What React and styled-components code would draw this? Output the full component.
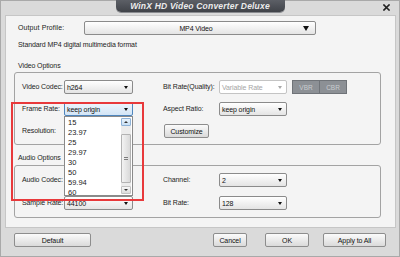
import React from 'react';
import styled, { createGlobalStyle, css } from 'styled-components';

const Global = createGlobalStyle`
  html, body { margin: 0; padding: 0; }
  body {
    width: 400px; height: 257px; overflow: hidden;
    background: #d6d6d6;
    font-family: "Liberation Sans", Arial, sans-serif;
  }
`;

const Window = styled.div`
  position: relative;
  width: 400px; height: 257px; box-sizing: border-box;
  display: flex; flex-direction: column;
  background: #dadada;
  border: 1px solid #a9a9a9;
`;

const TitleBar = styled.div`
  height: 14px; flex: none;
  display: grid; grid-template-columns: 1fr auto 1fr;
  align-items: start;
`;

const TitleTab = styled.div`
  grid-column: 2;
  width: 169px; height: 12px;
  margin-top: -1px;
  display: flex; align-items: center; justify-content: center;
  background: linear-gradient(#5c5f66, #404349);
  border-radius: 0 0 5px 5px;
  box-shadow: 0 1px 0 #8a8c90;
  color: #ececec;
  font-size: 8.5px; font-weight: bold; font-style: italic;
  letter-spacing: 0.2px;
`;

const Close = styled.div`
  grid-column: 3; justify-self: end;
  margin: 3px 9px 0 0;
  width: 7px; height: 7px;
  display: flex;
`;

const Panel = styled.div`
  flex: none;
  height: 213px; box-sizing: border-box;
  margin: 0 3px 0 4px;
  background: #f4f4f4;
  border: 1px solid #c6c6c6;
  padding: 5px 14px 0 8px;
  display: flex; flex-direction: column;
`;

const Text = styled.div`
  font-size: 7px; letter-spacing: -0.1px; color: #1c1c1c;
  height: 10px; line-height: 10px;
  white-space: nowrap;
`;

const ProfileRow = styled.div`
  display: flex; align-items: center;
  height: 14px;
  padding-left: 4px;
`;

const ProfileLabel = styled(Text)`
  width: 66px;
  letter-spacing: 0.1px;
`;

const Description = styled(Text)`
  margin: 5px 0 0 4px;
`;

const SectionTitle = styled(Text)`
  margin: ${p => p.$top}px 0 0 4px;
`;

const GroupBox = styled.div`
  margin-top: ${p => p.$top}px;
  border: 1px solid #a3a3a3;
  border-radius: 3px;
  padding: 7px 0 ${p => p.$bottom}px 7px;
  display: grid;
  grid-template-columns: 42px 69px 30px 56px 68px 5px auto;
  grid-auto-rows: 14px;
  row-gap: ${p => p.$gap}px;
  align-items: center;
  justify-items: start;
`;

const Cell = styled.div`
  grid-column: ${p => p.$col};
  position: relative;
  width: 100%; height: 14px;
  display: flex; align-items: center;
`;

const Select = styled.div`
  box-sizing: border-box;
  width: ${p => p.$w || '100%'}; height: 14px;
  border: 1px solid #8b8b8b;
  border-radius: 2px;
  background: linear-gradient(#ffffff, #e4e4e4);
  display: flex; align-items: center;
  padding: 0 4px 0 2px;
  font-size: 7px; letter-spacing: -0.1px; color: #111;
  white-space: nowrap;
  ${p => p.$active && css`
    border-color: #4f86bd;
    background: linear-gradient(#eef5fc, #d3e5f6);
  `}
  ${p => p.$disabled && css`
    border-color: #c4c4c4;
    background: #ffffff;
    color: #a5a5a5;
  `}
  ${p => p.$center && css`
    padding: 0 6px 0 4px;
  `}
`;

const SelectText = styled.span`
  flex: 1;
  text-align: ${p => (p.$center ? 'center' : 'left')};
`;

const Arrow = styled.span`
  width: 0; height: 0;
  border-left: ${p => (p.$big ? 3.5 : 2.5)}px solid transparent;
  border-right: ${p => (p.$big ? 3.5 : 2.5)}px solid transparent;
  border-top: ${p => (p.$big ? 5 : 3)}px solid ${p => (p.$disabled ? '#a8a8a8' : '#111')};
`;

const Toggle = styled.div`
  display: flex;
  height: 12px;
  border: 1px solid #6f7378;
  background: #8c9095;
`;

const ToggleItem = styled.div`
  width: 26px;
  display: flex; align-items: center; justify-content: center;
  font-size: 6.5px; color: #c9ccd0;
  & + & { border-left: 1px solid #6f7378; }
`;

const Button = styled.div`
  box-sizing: border-box;
  width: ${p => p.$w}px; height: 14px;
  border: 1px solid #8d8d8d;
  border-radius: 2px;
  background: linear-gradient(#fbfbfb, #dadada);
  display: flex; align-items: center; justify-content: center;
  font-size: 7px; letter-spacing: -0.1px; color: #111;
  margin-left: ${p => p.$ml || 0}px;
`;

const DropList = styled.div`
  position: absolute;
  left: 0; top: 14px;
  width: 69px; height: 80px;
  box-sizing: border-box;
  background: #fff;
  border: 1px solid #8a8a8a;
  display: flex;
  z-index: 5;
`;

const Items = styled.div`
  flex: 1;
  padding-top: 1px;
`;

const Item = styled.div`
  height: 10px; line-height: 10px;
  padding-left: 3px;
  font-size: 7.5px; color: #1a1a1a;
`;

const ScrollBar = styled.div`
  width: 10px;
  margin: 1px 1px 1px 0;
  display: flex; flex-direction: column;
  background: #ececec;
`;

const ScrollBtn = styled.div`
  height: 8px; box-sizing: border-box;
  display: flex; align-items: center; justify-content: center;
  border: 1px solid ${p => (p.$hot ? '#8fb3d8' : '#c2c2c2')};
  background: ${p => (p.$hot ? 'linear-gradient(#e9f3fc,#c9e0f5)' : 'linear-gradient(#f8f8f8,#dcdcdc)')};
  border-radius: 1px;
`;

const ScrollThumb = styled.div`
  margin: 8px 0 3px;
  flex: 1;
  box-sizing: border-box;
  border: 1px solid #b3b3b3;
  border-radius: 1px;
  background: linear-gradient(90deg, #f3f3f3, #d9d9d9);
  display: flex; align-items: center; justify-content: center;
`;

const Grip = styled.div`
  width: 4px; height: 4px;
  background: repeating-linear-gradient(#7d7d7d 0 1px, transparent 1px 2px);
`;

const SmallTri = styled.span`
  width: 0; height: 0;
  border-left: 2px solid transparent;
  border-right: 2px solid transparent;
  ${p => (p.$up ? css`border-bottom: 2px solid #333;` : css`border-top: 2px solid #333;`)}
`;

const Highlight = styled.div`
  position: absolute;
  left: 10px; top: 101px;
  width: 133px; height: 99px;
  box-sizing: border-box;
  border: 2px solid #e8393b;
  z-index: 10;
  pointer-events: none;
`;

const Footer = styled.div`
  flex: 1;
  display: flex; align-items: flex-start;
  padding: 5px 13px 0 13px;
`;

const Spacer = styled.div`
  flex: 1;
`;

const frameRates = ['15', '23.97', '25', '29.97', '30', '50', '59.94', '60'];

function Dropdown({ value, w, active, disabled }) {
  return (
    <Select $w={w} $active={active} $disabled={disabled}>
      <SelectText>{value}</SelectText>
      <Arrow $disabled={disabled} />
    </Select>
  );
}

export default function App() {
  return (
    <>
      <Global />
      <Window>
        <TitleBar>
          <TitleTab>WinX HD Video Converter Deluxe</TitleTab>
          <Close>
            <svg width="7" height="7" viewBox="0 0 7 7">
              <path d="M1 1 L6 6 M6 1 L1 6" stroke="#222" strokeWidth="1.6" strokeLinecap="square" />
            </svg>
          </Close>
        </TitleBar>

        <Panel>
          <ProfileRow>
            <ProfileLabel>Output Profile:</ProfileLabel>
            <Select $w="232px" $center>
              <SelectText $center>MP4 Video</SelectText>
              <Arrow $big />
            </Select>
          </ProfileRow>
          <Description>Standard MP4 digital multimedia format</Description>

          <SectionTitle $top={11}>Video Options</SectionTitle>
          <GroupBox $top={1} $bottom={6} $gap={8}>
            <Cell $col={1}><Text>Video Codec:</Text></Cell>
            <Cell $col={2}><Dropdown value="h264" /></Cell>
            <Cell $col={4}><Text>Bit Rate(Quality):</Text></Cell>
            <Cell $col={5}><Dropdown value="Variable Rate" disabled /></Cell>
            <Cell $col={7}>
              <Toggle>
                <ToggleItem>VBR</ToggleItem>
                <ToggleItem>CBR</ToggleItem>
              </Toggle>
            </Cell>

            <Cell $col={1}><Text>Frame Rate:</Text></Cell>
            <Cell $col={2}>
              <Dropdown value="keep origin" active />
              <DropList>
                <Items>
                  {frameRates.map(r => <Item key={r}>{r}</Item>)}
                </Items>
                <ScrollBar>
                  <ScrollBtn $hot><SmallTri $up /></ScrollBtn>
                  <ScrollThumb><Grip /></ScrollThumb>
                  <ScrollBtn><SmallTri /></ScrollBtn>
                </ScrollBar>
              </DropList>
            </Cell>
            <Cell $col={4}><Text>Aspect Ratio:</Text></Cell>
            <Cell $col={5}><Dropdown value="keep origin" /></Cell>

            <Cell $col={1}><Text>Resolution:</Text></Cell>
            <Cell $col={2}><Dropdown value="" /></Cell>
            <Cell $col={4}><Button $w={45} $ml={1}>Customize</Button></Cell>
          </GroupBox>

          <SectionTitle $top={8}>Audio Options</SectionTitle>
          <GroupBox $top={2} $bottom={7} $gap={9}>
            <Cell $col={1}><Text>Audio Codec:</Text></Cell>
            <Cell $col={2}><Dropdown value="" /></Cell>
            <Cell $col={4}><Text>Channel:</Text></Cell>
            <Cell $col={5}><Dropdown value="2" /></Cell>

            <Cell $col={1}><Text>Sample Rate:</Text></Cell>
            <Cell $col={2}><Dropdown value="44100" /></Cell>
            <Cell $col={4}><Text>Bit Rate:</Text></Cell>
            <Cell $col={5}><Dropdown value="128" /></Cell>
          </GroupBox>
        </Panel>

        <Footer>
          <Button $w={77}>Default</Button>
          <Spacer />
          <Button $w={34}>Cancel</Button>
          <Button $w={44} $ml={18}>OK</Button>
          <Button $w={63} $ml={14}>Apply to All</Button>
        </Footer>

        <Highlight />
      </Window>
    </>
  );
}
